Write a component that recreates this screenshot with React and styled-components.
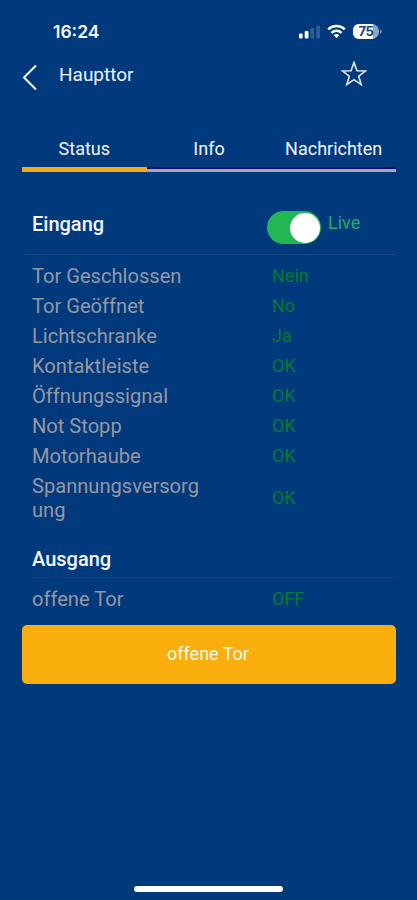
import React, {useState} from "react";
import styled, {createGlobalStyle} from "styled-components";


const GlobalStyle = createGlobalStyle`
  * {
    box-sizing: border-box;
  }

  body {
    margin: 0;
    background: #003a7c;
  }

  button {
    border: none;
    padding: 0;
    background: none;
    color: inherit;
    font: inherit;
    cursor: pointer;
  }
`;

const Screen = styled.div`
  display: flex;
  flex-direction: column;
  width: 417px;
  height: 900px;
  overflow: hidden;
  background: #003a7c;
  color: #f4f5fd;
  font-family: Roboto, sans-serif;
`;

const StatusBar = styled.div`
  display: flex;
  align-items: center;
  justify-content: space-between;
  height: 62px;
  padding: 0 34px 0 53px;
`;

const Clock = styled.span`
  font-family: Inter, sans-serif;
  font-size: 17.5px;
  font-weight: 600;
  letter-spacing: 0;
`;

const StatusIcons = styled.div`
  display: flex;
  align-items: center;
  padding-top: 1px;
`;

const Header = styled.header`
  display: flex;
  align-items: center;
  height: 28px;
  padding: 0 50px 0 22px;
`;

const BackButton = styled.button`
  display: flex;
  width: 37px;
  padding-top: 3px;
`;

const PageTitle = styled.h1`
  flex: 1;
  margin: 0;
  padding-bottom: 3px;
  font-size: 19px;
  font-weight: 400;
`;

const StarButton = styled.button`
  display: flex;
  padding-bottom: 5px;
`;

const Tabs = styled.nav`
  display: grid;
  grid-template-columns: repeat(3, 1fr);
  height: 47px;
  margin: 35px 21px 0 22px;
`;

const Tab = styled.button`
  display: flex;
  justify-content: center;
  padding-top: 13px;
  white-space: nowrap;
  font-size: 18px;
  line-height: 22px;
  box-shadow: ${({$active}) => $active
    ? "inset 0 -5px #f6ab14"
    : "inset 0 -3px #aaa7b8, inset 0 -5px #0a0c6b"};
`;

const SectionHeader = styled.div`
  display: flex;
  align-items: ${({$tall}) => $tall ? "flex-start" : "center"};
  height: ${({$tall}) => $tall ? 44 : 38}px;
  margin-top: ${({$tall}) => $tall ? 39 : 15}px;
  margin-left: ${({$tall}) => $tall ? 25 : 30}px;
  margin-right: 21px;
  padding-left: ${({$tall}) => $tall ? 7 : 2}px;
  border-bottom: 1px solid ${({$tall}) => $tall ? "#134787" : "#084081"};
`;

const SectionTitle = styled.h2`
  width: 235px;
  margin: 0;
  padding-top: ${({$offset}) => $offset || 0}px;
  font-size: 20px;
  font-weight: 500;
  line-height: 24px;
`;

const Switch = styled.button`
  display: flex;
  justify-content: ${({$on}) => $on ? "flex-end" : "flex-start"};
  align-items: center;
  width: 54px;
  height: 33px;
  padding: 0 1px 0 2px;
  border-radius: 17px;
  background: ${({$on}) => $on ? "#23b753" : "#7d8794"};
`;

const Knob = styled.span`
  width: 30px;
  height: 30px;
  border-radius: 50%;
  background: #fff;
`;

const LiveLabel = styled.span`
  margin-left: 7px;
  padding-top: 1px;
  color: #22ae6a;
  font-size: 18px;
  line-height: 22px;
`;

const SignalList = styled.div`
  padding: 6px 21px 0 32px;
`;

const SignalRow = styled.div`
  display: grid;
  grid-template-columns: 170px 1fr;
  column-gap: 70px;
  align-items: center;
  padding: 3px 0;
`;

const SignalName = styled.span`
  color: #9797a3;
  font-size: 20.1px;
  line-height: 24px;
  word-break: break-all;
`;

const SignalValue = styled.span`
  color: #057a35;
  font-size: 18px;
  line-height: 24px;
`;

const GateButton = styled.button`
  height: 59px;
  margin: 11px 21px 0 22px;
  padding: 0 2px 2px 0;
  border-radius: 5px;
  background: #f9ae0c;
  color: #fffaf0;
  font-size: 18px;
`;

const HomeIndicator = styled.div`
  width: 149px;
  height: 6px;
  margin: auto auto 8px 134px;
  border-radius: 3px;
  background: #fff;
`;

const BatteryText = styled.text`
  font-family: Inter, sans-serif;
  font-size: 13px;
  font-weight: 700;
  letter-spacing: -0.3px;
`;


const inputs = [
    {name: "Tor Geschlossen", value: "Nein"},
    {name: "Tor Geöffnet", value: "No"},
    {name: "Lichtschranke", value: "Ja"},
    {name: "Kontaktleiste", value: "OK"},
    {name: "Öffnungssignal", value: "OK"},
    {name: "Not Stopp", value: "OK"},
    {name: "Motorhaube", value: "OK"},
    {name: "Spannungsversorgung", value: "OK"},
];

const outputs = [{name: "offene Tor", value: "OFF"}];

const tabs = ["Status", "Info", "Nachrichten"];


const PhoneIcons = () => (
    <StatusIcons>
        <svg width="84" height="18" viewBox="0 0 84 18">
            {/* Signal */}
            <rect x="0" y="10.5" width="3.6" height="5" rx="1" fill="#fff"/>
            <rect x="5.7" y="8" width="3.8" height="7.5" rx="1" fill="#fff"/>
            <rect x="11.5" y="5" width="3.6" height="10.5" rx="1" fill="#2f6097"/>
            <rect x="17.3" y="2.5" width="3.6" height="13" rx="1" fill="#2f6097"/>
            {/* Wifi */}
            <g fill="none" stroke="#fff" strokeWidth="2.5">
                <path d="M29.2 6.4a12 12 0 0 1 16.6 0"/>
                <path d="M32.4 9.8a7.5 7.5 0 0 1 10.2 0"/>
            </g>
            <path d="M34.6 12.1a4.5 4.5 0 0 1 5.8 0L37.5 15.2z" fill="#fff"/>
            {/* Battery */}
            <path d="M60 1h13a7 7 0 0 1 7 7v1a7 7 0 0 1-7 7h-13a6 6 0 0 1-6-6V7a6 6 0 0 1 6-6z" fill="#8aa5c6"/>
            <path d="M60 1h14v15H60a6 6 0 0 1-6-6V7a6 6 0 0 1 6-6z" fill="#fff"/>
            <path d="M81 6.3c1.2.5 1.8 1.3 1.8 2.2s-.6 1.7-1.8 2.2z" fill="#6d8db3"/>
            <BatteryText x="67" y="13.2" textAnchor="middle" fill="#14437c">75</BatteryText>
        </svg>
    </StatusIcons>
);

const Signals = ({items}) => (
    <SignalList>
        {items.map(item => (
            <SignalRow key={item.name}>
                <SignalName>{item.name}</SignalName>
                <SignalValue>{item.value}</SignalValue>
            </SignalRow>
        ))}
    </SignalList>
);

const App = () => {
    const [activeTab, setActiveTab] = useState("Status");
    const [live, setLive] = useState(true);

    return (
        <Screen>
            <GlobalStyle/>
            <StatusBar>
                <Clock>16:24</Clock>
                <PhoneIcons/>
            </StatusBar>

            <Header>
                <BackButton aria-label="Zurück">
                    <svg width="16" height="27" viewBox="0 0 16 27" fill="none" stroke="#f4f5fd" strokeWidth="2">
                        <path d="M14 1.5 2 13.5l12 12"/>
                    </svg>
                </BackButton>
                <PageTitle>Haupttor</PageTitle>
                <StarButton aria-label="Favorit">
                    <svg width="26" height="26" viewBox="0 0 26 26" fill="none" stroke="#e9e8f6" strokeWidth="1.6">
                        <path d="M13 1.5l3 8.2 8.6.2-6.9 5.3 2.5 8.4L13 18.7l-7.2 4.9 2.5-8.4L1.4 9.9l8.6-.2z"/>
                    </svg>
                </StarButton>
            </Header>

            <Tabs>
                {tabs.map(tab => (
                    <Tab key={tab} $active={tab === activeTab} onClick={() => setActiveTab(tab)}>{tab}</Tab>
                ))}
            </Tabs>

            <SectionHeader $tall>
                <SectionTitle $offset={1}>Eingang</SectionTitle>
                <Switch $on={live} onClick={() => setLive(!live)} aria-label="Live"><Knob/></Switch>
                <LiveLabel>Live</LiveLabel>
            </SectionHeader>
            <Signals items={inputs}/>

            <SectionHeader>
                <SectionTitle>Ausgang</SectionTitle>
            </SectionHeader>
            <Signals items={outputs}/>

            <GateButton>offene Tor</GateButton>
            <HomeIndicator/>
        </Screen>
    );
}

export default App;
